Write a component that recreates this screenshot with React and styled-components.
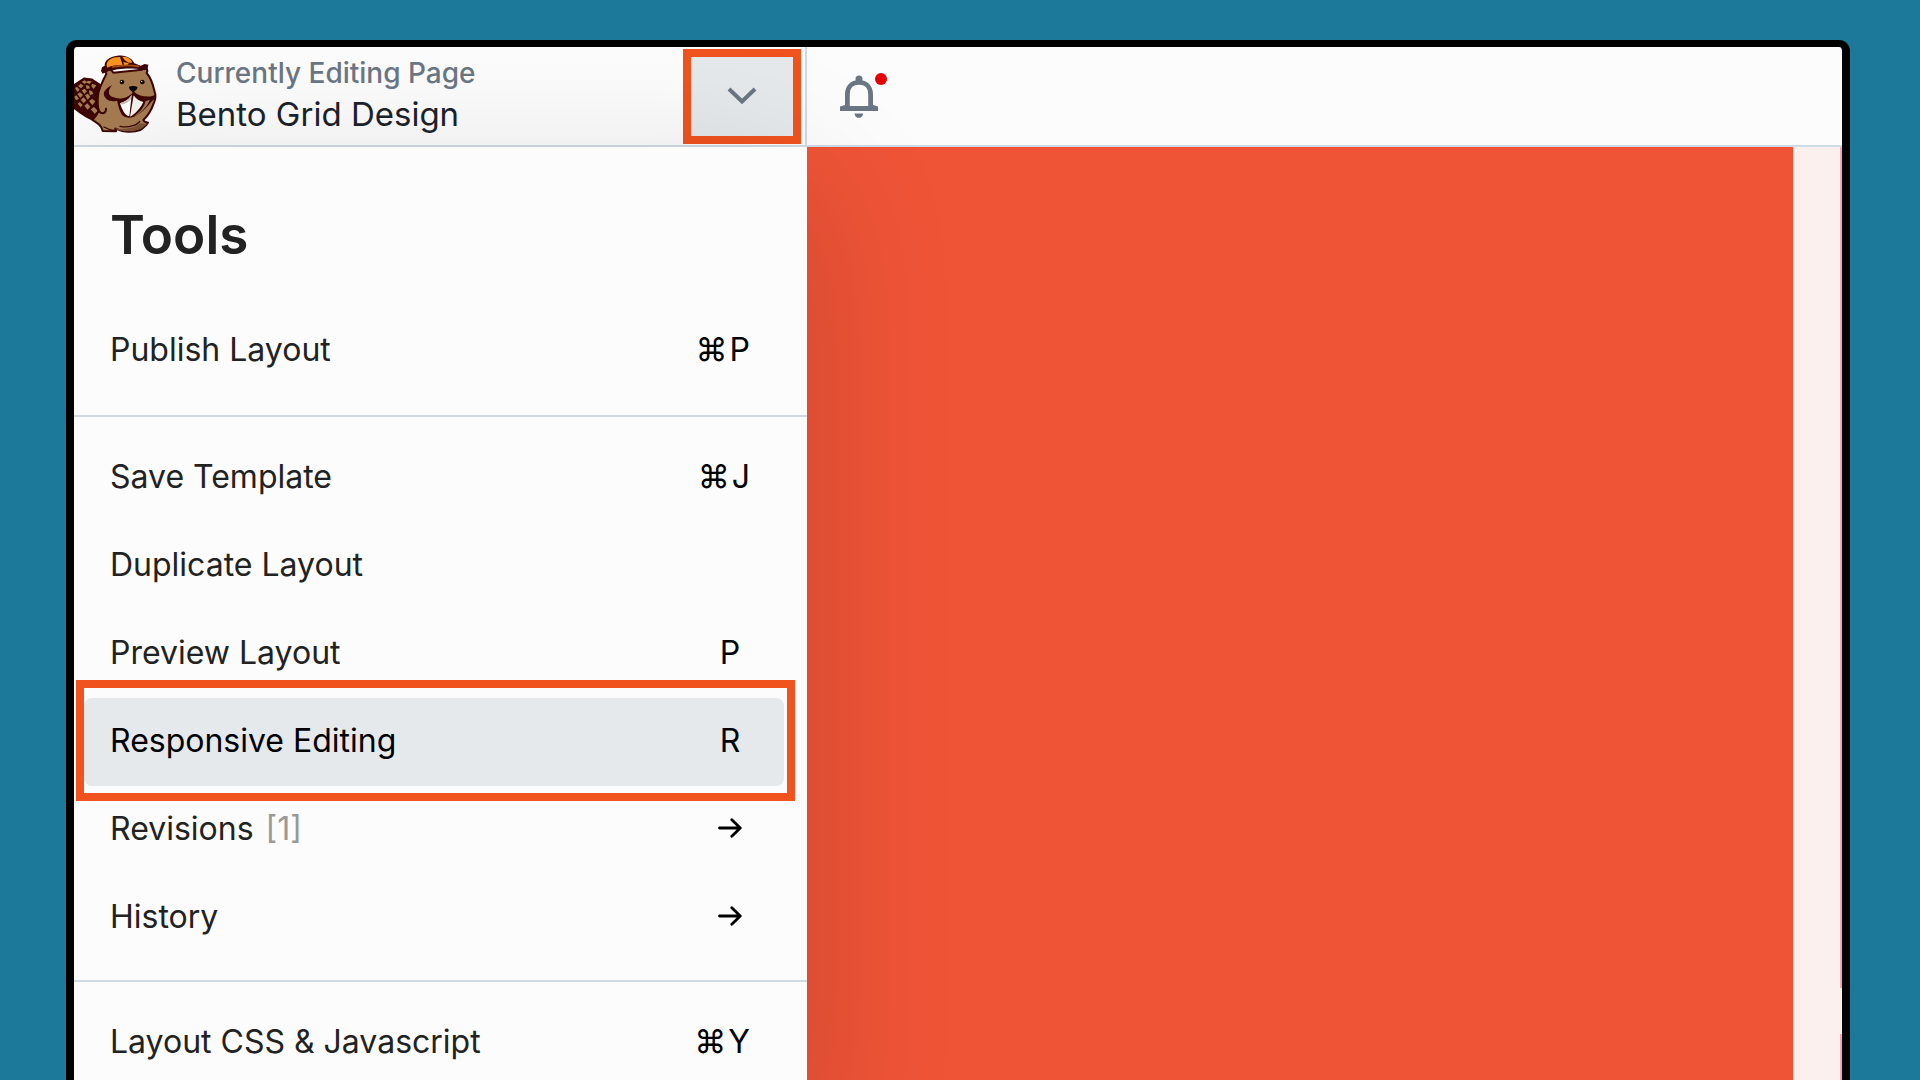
import styled, { createGlobalStyle } from 'styled-components'

const GlobalStyle = createGlobalStyle`
  * {
    box-sizing: border-box;
  }
  body {
    margin: 0;
    font-family: Inter, 'Liberation Sans', sans-serif;
  }
  button {
    font: inherit;
    color: inherit;
    border: 0;
    cursor: pointer;
  }
`

const Page = styled.div`
  height: 100vh;
  padding: 40px 70px 0 66px;
  overflow: hidden;
  background: #1d7999;
`

const Frame = styled.div`
  display: flex;
  flex-direction: column;
  min-height: 100vh;
  border: 8px solid #000;
  border-top-width: 7px;
  border-bottom: 0;
  border-radius: 11px 11px 0 0;
  overflow: hidden;
  background: #fcfcfc;
`

const Header = styled.header`
  display: flex;
  height: 100px;
  border-bottom: 2px solid #d0dae5;
`

const TitleBar = styled.div`
  display: flex;
  align-items: center;
  width: 733px;
  padding: 0 4px 4px 0;
  border-right: 2px solid #d0dae5;
`

const Titles = styled.div`
  flex: 1;
  padding-left: 18px;
`

const Eyebrow = styled.div`
  font-size: 28px;
  font-weight: 500;
  line-height: 40px;
  color: #6b7684;
`

const PageName = styled.div`
  font-size: 33px;
  line-height: 42px;
  color: #1b222b;
`

const MenuToggle = styled.button`
  display: flex;
  align-items: center;
  justify-content: center;
  align-self: flex-start;
  width: 118px;
  height: 95px;
  margin-top: 2px;
  padding: 0 0 2px;
  border: 8px solid #f0531e;
  background: #e5e9ec;
`

const BellButton = styled.button`
  position: relative;
  display: flex;
  align-items: center;
  padding: 0 33px;
  background: none;
`

const Dot = styled.span`
  position: absolute;
  top: 26px;
  left: 68px;
  width: 12px;
  height: 12px;
  border-radius: 50%;
  background: #e20000;
`

const Main = styled.main`
  flex: 1;
  display: flex;
`

const Panel = styled.nav`
  position: relative;
  z-index: 1;
  width: 733px;
  background: #fcfcfc;
  box-shadow: 0 36px 140px rgba(0, 0, 0, 0.15);
`

const Heading = styled.h2`
  margin: 0;
  padding: 53px 36px 37px;
  font-size: 53px;
  font-weight: 600;
  line-height: 70px;
  color: #222;
`

const Section = styled.div`
  padding: ${props => (props.$first ? '0 23px 20px 10px' : '17px 23px 18px 10px')};

  & + & {
    border-top: 2px solid #d0dae5;
  }
`

const Item = styled.button`
  position: relative;
  display: flex;
  align-items: center;
  width: 100%;
  height: 88px;
  padding: 0 34px 4px 26px;
  border-radius: 8px;
  font-size: 32px;
  text-align: left;
  color: ${props => (props.$active ? '#000' : '#222')};
  background: ${props => (props.$active ? '#e5e9ec' : 'none')};

  &::after {
    content: ${props => (props.$active ? "''" : 'none')};
    position: absolute;
    z-index: 1;
    inset: -18px -11px -15px -8px;
    border: 8px solid #f0531e;
  }
`

const Count = styled.span`
  margin-left: 12px;
  color: #999;
`

const Keys = styled.span`
  display: flex;
  align-items: center;
  justify-content: center;
  gap: 2px;
  min-width: 40px;
  margin-left: auto;
  color: #000;
`

const Canvas = styled.div`
  flex: 1;
  background: #ef5437;
`

const Gutter = styled.div`
  display: flex;
  flex-direction: column;
  align-items: flex-end;
  gap: 46px;
  width: 49px;
  border-left: 1px solid #f7d3cb;
  background: #fbf0ee;
`

const Edge = styled.div`
  flex: ${props => (props.$tall ? '0 0 841px' : '1')};
  width: 2px;
  background: #f8a3bf;
`

function Beaver() {
  return (
    <svg width="84" height="80" viewBox="42 56 252 240" strokeLinecap="round" strokeLinejoin="round">
      <path d="M38 152L72 129L96 132L120 148L128 240L118 262C90 252 62 236 38 214Z" fill="#3d0604" stroke="#3d0604" strokeWidth="5" />
      <g fill="#a67c52">
        <path d="M65 140l8-5 9 5-8 6zM83 136l12 2-6 8-9-4zM54 152l8-7 9 6-8 8zM77 149l10 2 3 8-10 2zM96 145l13 5-8 11-7-8zM65 165l9-5 7 8-8 8zM45 158l6-4 8 9-7 7zM87 165l9 2 4 9-11 4zM52 176l8-5 9 8-8 9zM75 180l8-5 8 9-8 9zM43 184l6-4 8 10-9 5zM62 193l9-7 8 9-8 9zM87 197l9-7 10 8-9 12zM53 205l6-5 9 9-6 7zM73 211l9-7 9 10-8 9zM92 222l10-7 12 12-10 8z" />
      </g>
      <path
        d="M139 116C133 105 139 95 150 100L160 112L246 103C255 92 266 101 260 113C272 127 279 148 283 166C288 180 288 190 282 202C274 225 265 241 250 254C252 261 261 261 264 262C258 275 247 279 241 284C220 292 188 291 166 280L168 288L128 287L124 276C118 264 106 260 98 254C104 246 111 240 116 226C110 204 112 172 122 152C126 142 133 127 139 116Z"
        fill="#a67c52"
        stroke="#3d0604"
        strokeWidth="6"
      />
      <path d="M164 279C190 284 225 279 240 264L262 265C247 281 226 289 200 288C186 288 174 286 164 279Z" fill="#7b5235" />
      <path d="M239 258C231 270 206 278 180 273M132 275C144 282 156 286 168 287" fill="none" stroke="#3d0604" strokeWidth="4" />
      <path d="M118 155C109 185 110 202 114 217C118 240 139 238 138 220" fill="none" stroke="#3d0604" strokeWidth="6" />
      <path d="M156 150C140 157 129 169 132 180C137 196 155 201 171 196C176 214 179 233 191 243C204 250 221 247 231 239C255 226 271 200 284 190L286 178C268 188 241 185 222 169C202 190 177 193 160 186C144 181 142 166 156 150Z" fill="#3d0604" />
      <path d="M257 197C252 218 241 228 222 243C245 233 263 211 269 194Z" fill="#a67c52" />
      <path d="M180 204C194 200 207 192 215 179L208 243C194 241 187 224 180 204Z" fill="#fff" />
      <path d="M221 180C228 192 239 197 250 200C242 218 224 238 210 244Z" fill="#f4f1ef" />
      <path d="M180 204C194 200 207 192 215 179L212 193C203 202 193 207 181 208Z" fill="#c9bdb6" />
      <path d="M207 154C213 151 225 151 232 155C234 161 225 166 221 171C215 167 207 164 207 154Z" fill="#090909" />
      <path d="M219 165L219 180" stroke="#3d0604" strokeWidth="4" />
      <g fill="#170b0b">
        <circle cx="186" cy="140" r="7" />
        <circle cx="247" cy="140" r="7" />
      </g>
      <circle cx="184" cy="138" r="2" fill="#fff" />
      <circle cx="245" cy="138" r="2" fill="#fff" />
      <path d="M123 107L126 96L134 91C133 76 148 63 172 61C198 57 218 70 223 84L242 91L254 86L265 88L262 104L248 104C218 96 170 100 145 108L128 115Z" fill="#3d0604" />
      <path d="M140 91C139 77 151 68 168 66L180 65L188 89C171 88 152 91 142 97Z" fill="#f7941e" />
      <path d="M187 64L199 65C209 68 214 74 217 82L206 82L194 75ZM190 80L207 84L202 89L192 89Z" fill="#f7941e" />
      <path d="M158 95C185 89 212 89 235 93" fill="none" stroke="#a94e12" strokeWidth="5" />
      <path d="M144 109L153 108L145 117Z" fill="#a67c52" />
    </svg>
  )
}

function Bell() {
  return (
    <svg width="38" height="43" viewBox="0 0 38 43" fill="#6b7684">
      <circle cx="19" cy="4" r="3.5" />
      <path d="M7.4 32V19C7.4 12 12 7.4 19 7.4S30.6 12 30.6 19V32" fill="none" stroke="#6b7684" strokeWidth="4.8" />
      <path d="M0 31.5L5 30V31H33V30L38 31.5V36H0Z" />
      <path d="M14.4 38.4H23.2C22.6 41.4 21 42.8 18.8 42.8S15 41.4 14.4 38.4Z" />
    </svg>
  )
}

function Chevron() {
  return (
    <svg width="30" height="18" viewBox="0 0 30 18" fill="none" stroke="#6b7684" strokeWidth="4">
      <path d="M2 2L15 14.5L28 2" />
    </svg>
  )
}

function Arrow() {
  return (
    <svg width="24" height="20" viewBox="0 0 24 20" fill="none" stroke="#000" strokeWidth="2.8" strokeLinecap="round" strokeLinejoin="round">
      <path d="M1.5 10H22M13.8 1.7L22.3 10L13.8 18.3" />
    </svg>
  )
}

const sections = [
  [{ label: 'Publish Layout', keys: ['⌘', 'P'] }],
  [
    { label: 'Save Template', keys: ['⌘', 'J'] },
    { label: 'Duplicate Layout' },
    { label: 'Preview Layout', keys: ['P'] },
    { label: 'Responsive Editing', keys: ['R'], active: true },
    { label: 'Revisions', count: 1, arrow: true },
    { label: 'History', arrow: true }
  ],
  [{ label: 'Layout CSS & Javascript', keys: ['⌘', 'Y'] }]
]

function App() {
  return (
    <Page>
      <GlobalStyle />
      <Frame>
        <Header>
          <TitleBar>
            <Beaver />
            <Titles>
              <Eyebrow>Currently Editing Page</Eyebrow>
              <PageName>Bento Grid Design</PageName>
            </Titles>
            <MenuToggle aria-label="Toggle tools menu">
              <Chevron />
            </MenuToggle>
          </TitleBar>
          <BellButton aria-label="Notifications">
            <Bell />
            <Dot />
          </BellButton>
        </Header>
        <Main>
          <Panel>
            <Heading>Tools</Heading>
            {sections.map((items, index) => (
              <Section key={index} $first={index === 0}>
                {items.map(item => (
                  <Item key={item.label} $active={item.active}>
                    {item.label}
                    {item.count && <Count>[{item.count}]</Count>}
                    <Keys>
                      {item.keys && item.keys.map(key => <span key={key}>{key}</span>)}
                      {item.arrow && <Arrow />}
                    </Keys>
                  </Item>
                ))}
              </Section>
            ))}
          </Panel>
          <Canvas />
          <Gutter>
            <Edge $tall />
            <Edge />
          </Gutter>
        </Main>
      </Frame>
    </Page>
  )
}

export default App
